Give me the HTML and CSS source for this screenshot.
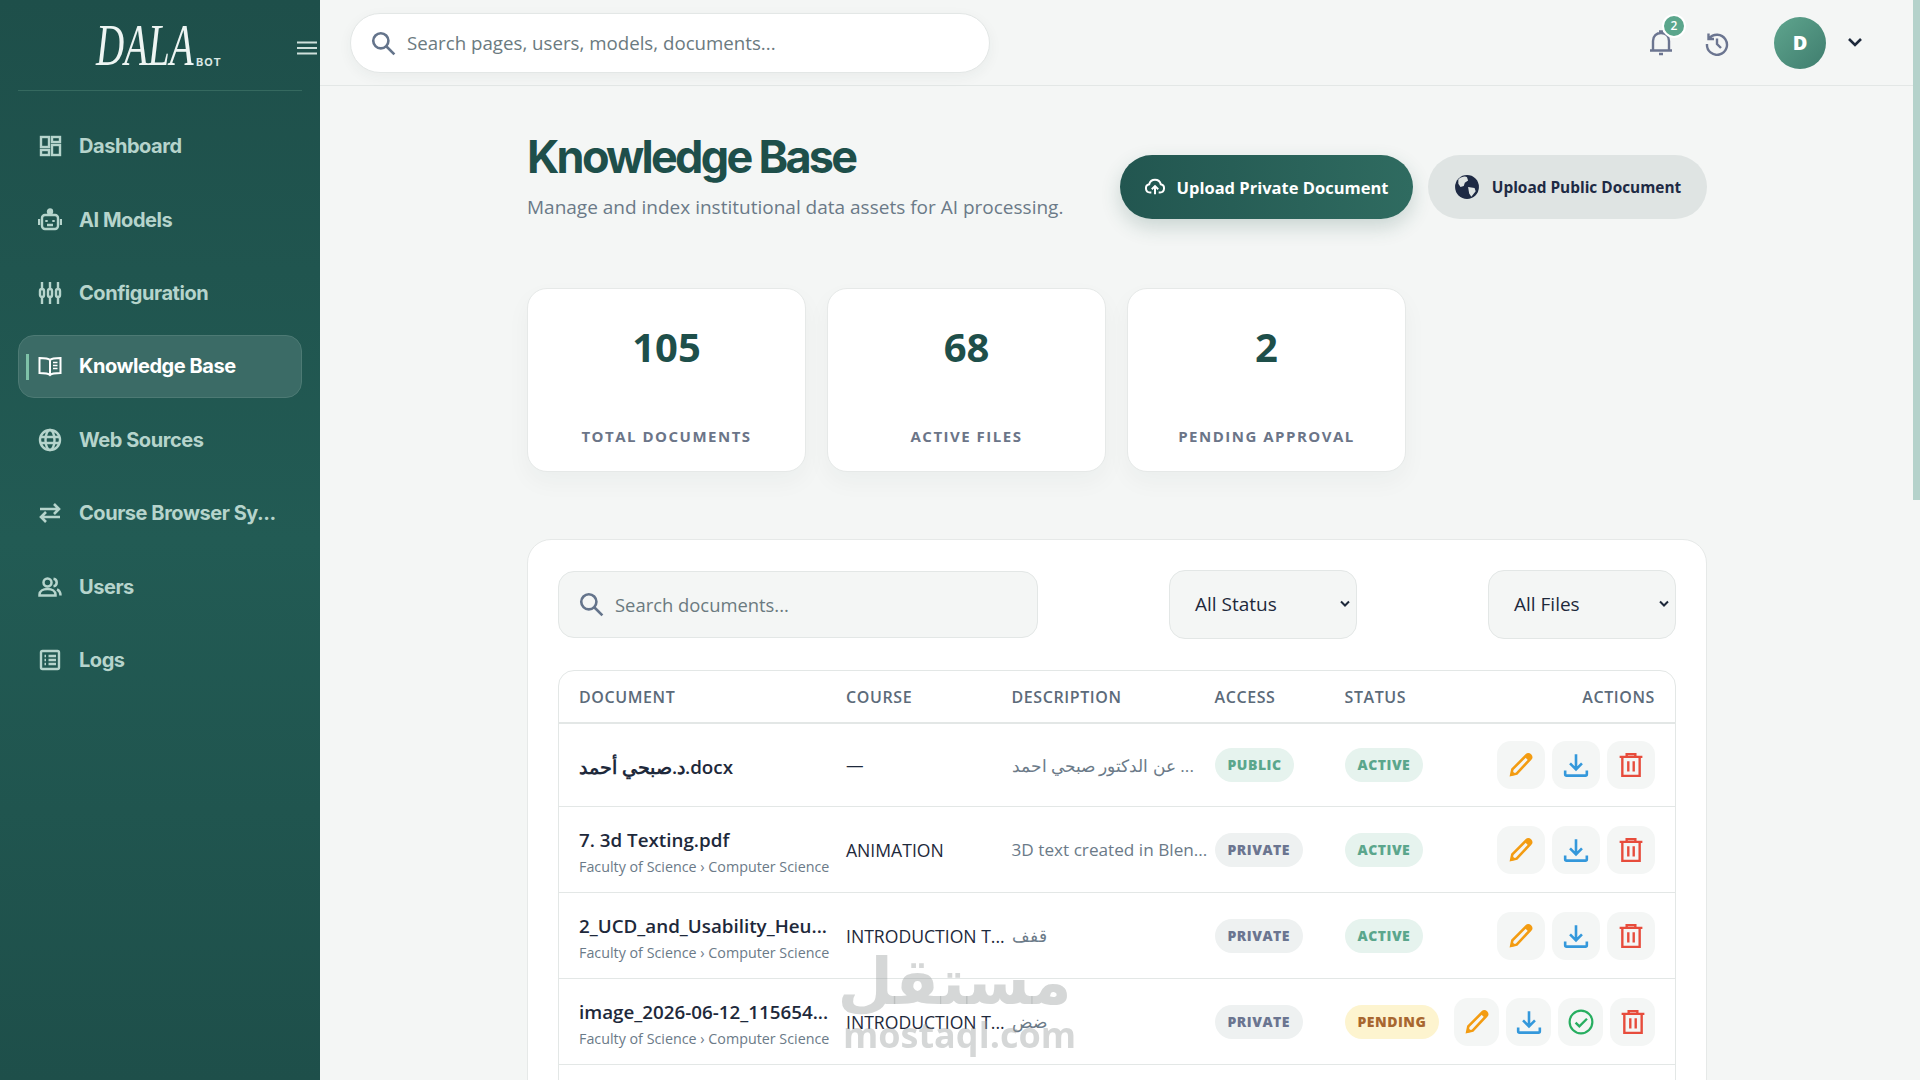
FILE: index.html
```html
<!DOCTYPE html>
<html lang="en">
<head>
    <meta charset="UTF-8">
    <meta name="viewport" content="width=device-width, initial-scale=1.0">
    <title>Knowledge Base</title>
    <link rel="stylesheet" href="styles.css">
</head>
<body>
    <div class="app">
        <aside class="sidebar">
            <div class="brand">
                <span class="brand-name">DALA</span>
                <span class="brand-sub">BOT</span>
                <button class="menu-toggle" aria-label="Toggle menu">
                    <svg viewBox="0 0 22 16" width="22" height="16" fill="none" stroke="currentColor" stroke-width="2"><path d="M1 2.500h20M1 8h20M1 13.500h20"/></svg>
                </button>
            </div>
            <nav class="nav">
                <a class="nav-item">
                    <svg class="nav-icon" viewBox="0 0 24 24" fill="none" stroke="currentColor" stroke-width="2.400"><rect x="3" y="3" width="8" height="10"/><rect x="14" y="3" width="8" height="5"/><rect x="3" y="16" width="8" height="5"/><rect x="14" y="11" width="8" height="10"/></svg>
                    <span>Dashboard</span>
                </a>
                <a class="nav-item">
                    <svg class="nav-icon" viewBox="0 0 24 24" fill="none" stroke="currentColor" stroke-width="2.400"><rect x="4" y="7" width="16" height="14" rx="3"/><circle cx="12" cy="3.500" r="2" fill="currentColor"/><path d="M12 4v3M1 11v6M23 11v6M8.500 12v2M15.500 12v2M9 17h6"/></svg>
                    <span>AI Models</span>
                </a>
                <a class="nav-item">
                    <svg class="nav-icon" viewBox="0 0 24 24" fill="none" stroke="currentColor" stroke-width="2.400"><path d="M4 1v22M12 1v22M20 1v22"/><rect x="2" y="8" width="4" height="8" rx="2" fill="#20564f"/><rect x="10" y="8" width="4" height="8" rx="2" fill="#20564f"/><rect x="18" y="8" width="4" height="8" rx="2" fill="#20564f"/></svg>
                    <span>Configuration</span>
                </a>
                <a class="nav-item active">
                    <svg class="nav-icon" viewBox="0 0 24 24" fill="none" stroke="currentColor" stroke-width="2"><path d="M12 6C10 4 6 4 1.500 4v15c4.500 0 8.500 0 10.500 2 2-2 6-2 10.500-2V4C18 4 14 4 12 6zM12 6v15"/><path d="M15 8.500h4.500M15 11.500h4.500M15 14.500h4.500" stroke-width="1.600"/></svg>
                    <span>Knowledge Base</span>
                </a>
                <a class="nav-item">
                    <svg class="nav-icon" viewBox="0 0 24 24" fill="none" stroke="currentColor" stroke-width="2.400"><circle cx="12" cy="12" r="10"/><ellipse cx="12" cy="12" rx="4.500" ry="10"/><path d="M2.500 9h19M2.500 15h19"/></svg>
                    <span>Web Sources</span>
                </a>
                <a class="nav-item">
                    <svg class="nav-icon" viewBox="0 0 24 24" fill="none" stroke="currentColor" stroke-width="2.600"><path d="M2 8h19M16 3l5 5-5 5M3 16h19M8 11l-5 5 5 5"/></svg>
                    <span>Course Browser Sy...</span>
                </a>
                <a class="nav-item">
                    <svg class="nav-icon" viewBox="0 0 24 24" fill="none" stroke="currentColor" stroke-width="2.500"><circle cx="9.500" cy="7.500" r="4"/><path d="M1.500 20.500v-1c0-3.500 3.500-5.500 8-5.500s8 2 8 5.500v1zM15.500 3.800c2 .3 3.200 2 3.200 3.700s-1.200 3.400-3.200 3.700M19 14.500c2.500 1 3.500 2.800 3.500 6"/></svg>
                    <span>Users</span>
                </a>
                <a class="nav-item">
                    <svg class="nav-icon" viewBox="0 0 24 24" fill="none" stroke="currentColor" stroke-width="2.400"><rect x="3" y="3" width="18" height="18" rx="1.500"/><path d="M10.500 8H18M10.500 12H18M10.500 16H18M6.500 8h1.500M6.500 12h1.500M6.500 16h1.500"/></svg>
                    <span>Logs</span>
                </a>
            </nav>
        </aside>

        <div class="page">
            <header class="topbar">
                <div class="global-search">
                    <svg class="search-icon" viewBox="0 0 24 24" fill="none" stroke="#64748b" stroke-width="2.400"><circle cx="10" cy="10" r="7"/><path d="M15 15l7.500 7.500"/></svg>
                    <span class="placeholder">Search pages, users, models, documents...</span>
                </div>
                <div class="topbar-right">
                    <div class="bell">
                        <svg viewBox="0 0 24 28" width="24" height="28" fill="none" stroke="#6b7590" stroke-width="2.400"><path d="M1 21.500h22M4 21.500V12c0-5 3.500-8 8-8s8 3 8 8v9.500M10 2.500h4M10 25h4"/></svg>
                        <span class="bell-badge">2</span>
                    </div>
                    <svg class="history" viewBox="0 0 24 24" width="24" height="24" fill="none" stroke="#6b7590" stroke-width="2.400"><path d="M4.200 6.500A10 10 0 1 1 2 12M3.500 1.500v5.500H9M12 6.500V12l4 4"/></svg>
                    <div class="avatar">D</div>
                    <svg class="caret" viewBox="0 0 16 10" width="16" height="10" fill="none" stroke="#1e293b" stroke-width="2.600"><path d="M2 2l6 6 6-6"/></svg>
                </div>
            </header>

            <main class="content">
                <div class="page-head">
                    <div>
                        <h1>Knowledge Base</h1>
                        <p>Manage and index institutional data assets for AI processing.</p>
                    </div>
                    <div class="head-actions">
                        <button class="btn btn-primary">
                            <svg viewBox="0 0 24 24" width="22" height="22" fill="none" stroke="#fff" stroke-width="2.200"><path d="M8 18H6.500a4.500 4.500 0 0 1-.8-8.900 6.500 6.500 0 0 1 12.600 0 4.500 4.500 0 0 1-.8 8.900H16M12 20v-8M8.500 14.500L12 11l3.500 3.500"/></svg>
                            Upload Private Document
                        </button>
                        <button class="btn btn-secondary">
                            <svg viewBox="0 0 24 24" width="26" height="26"><circle cx="12" cy="12" r="11" fill="#1e2a44"/><path d="M4 5c3-3 7-3 8-2l1 3-3 2-1 3-3 1-2-3zM13 12l6 1 1 3-4 5-2-3z" fill="#dfe4e3"/></svg>
                            Upload Public Document
                        </button>
                    </div>
                </div>

                <section class="stats">
                    <div class="stat-card"><div class="stat-value">105</div><div class="stat-label">TOTAL DOCUMENTS</div></div>
                    <div class="stat-card"><div class="stat-value">68</div><div class="stat-label">ACTIVE FILES</div></div>
                    <div class="stat-card"><div class="stat-value">2</div><div class="stat-label">PENDING APPROVAL</div></div>
                </section>

                <section class="panel">
                    <div class="filters">
                        <div class="doc-search">
                            <svg class="search-icon" viewBox="0 0 24 24" fill="none" stroke="#64748b" stroke-width="2.400"><circle cx="10" cy="10" r="7"/><path d="M15 15l7.500 7.500"/></svg>
                            <span class="placeholder small">Search documents...</span>
                        </div>
                        <div class="select">All Status<svg viewBox="0 0 10 8" width="10" height="8" fill="none" stroke="#1e293b" stroke-width="2"><path d="M1 1.500l4 4 4-4"/></svg></div>
                        <div class="select">All Files<svg viewBox="0 0 10 8" width="10" height="8" fill="none" stroke="#1e293b" stroke-width="2"><path d="M1 1.500l4 4 4-4"/></svg></div>
                    </div>

                    <table class="docs">
                        <colgroup>
                            <col class="col-doc"><col class="col-course"><col class="col-desc"><col class="col-access"><col class="col-status"><col>
                        </colgroup>
                        <thead>
                            <tr>
                                <th>DOCUMENT</th><th>COURSE</th><th>DESCRIPTION</th><th>ACCESS</th><th>STATUS</th><th class="right">ACTIONS</th>
                            </tr>
                        </thead>
                        <tbody>
                            <tr class="row-short">
                                <td><div class="doc-name"><bdi>د.صبحي أحمد</bdi>.docx</div></td>
                                <td>—</td>
                                <td class="desc"><bdi dir="rtl">... عن الدكتور صبحي احمد</bdi></td>
                                <td><span class="pill pill-public">PUBLIC</span></td>
                                <td><span class="pill pill-active">ACTIVE</span></td>
                                <td><div class="actions">
                                    <button class="act"><svg viewBox="0 0 24 24"><use href="#i-edit"/></svg></button>
                                    <button class="act"><svg viewBox="0 0 24 24"><use href="#i-down"/></svg></button>
                                    <button class="act"><svg viewBox="0 0 24 24"><use href="#i-trash"/></svg></button>
                                </div></td>
                            </tr>
                            <tr>
                                <td><div class="doc-name">7. 3d Texting.pdf</div><div class="doc-path">Faculty of Science › Computer Science</div></td>
                                <td>ANIMATION</td>
                                <td class="desc">3D text created in Blen...</td>
                                <td><span class="pill pill-private">PRIVATE</span></td>
                                <td><span class="pill pill-active">ACTIVE</span></td>
                                <td><div class="actions">
                                    <button class="act"><svg viewBox="0 0 24 24"><use href="#i-edit"/></svg></button>
                                    <button class="act"><svg viewBox="0 0 24 24"><use href="#i-down"/></svg></button>
                                    <button class="act"><svg viewBox="0 0 24 24"><use href="#i-trash"/></svg></button>
                                </div></td>
                            </tr>
                            <tr>
                                <td><div class="doc-name">2_UCD_and_Usability_Heu...</div><div class="doc-path">Faculty of Science › Computer Science</div></td>
                                <td>INTRODUCTION T...</td>
                                <td class="desc">قفف</td>
                                <td><span class="pill pill-private">PRIVATE</span></td>
                                <td><span class="pill pill-active">ACTIVE</span></td>
                                <td><div class="actions">
                                    <button class="act"><svg viewBox="0 0 24 24"><use href="#i-edit"/></svg></button>
                                    <button class="act"><svg viewBox="0 0 24 24"><use href="#i-down"/></svg></button>
                                    <button class="act"><svg viewBox="0 0 24 24"><use href="#i-trash"/></svg></button>
                                </div></td>
                            </tr>
                            <tr>
                                <td><div class="doc-name">image_2026-06-12_115654...</div><div class="doc-path">Faculty of Science › Computer Science</div></td>
                                <td>INTRODUCTION T...</td>
                                <td class="desc">ضض</td>
                                <td><span class="pill pill-private">PRIVATE</span></td>
                                <td><span class="pill pill-pending">PENDING</span></td>
                                <td><div class="actions narrow">
                                    <button class="act"><svg viewBox="0 0 24 24"><use href="#i-edit"/></svg></button>
                                    <button class="act"><svg viewBox="0 0 24 24"><use href="#i-down"/></svg></button>
                                    <button class="act"><svg viewBox="0 0 24 24"><use href="#i-check"/></svg></button>
                                    <button class="act"><svg viewBox="0 0 24 24"><use href="#i-trash"/></svg></button>
                                </div></td>
                            </tr>
                            <tr class="row-more"><td colspan="6"></td></tr>
                        </tbody>
                    </table>
                </section>
            </main>
        </div>
    </div>

    <div class="scroll-thumb"></div>
    <div class="watermark"><span class="wm-ar">مستقل</span><span class="wm-en">mostaql.com</span></div>

    <!-- shared action icons -->
    <svg class="sprite" width="0" height="0">
        <symbol id="i-edit" viewBox="0 0 24 24"><path d="M3 21l1-5L17 3c1-1 2.500-1 3.500 0s1 2.500 0 3.500L8 20z" fill="none" stroke="#f39c12" stroke-width="2.400"/><path d="M15.500 4.500l4 4L21 7c1-1 1-2.800 0-3.800s-2.800-1-3.800 0zM2.500 22l1-5 4 4z" fill="#f39c12"/></symbol>
        <symbol id="i-down" viewBox="0 0 24 24"><path d="M12 2v14M6.500 10.500L12 16l5.500-5.500M2 17v3.500c0 .8.500 1.300 1.300 1.300h17.400c.8 0 1.300-.5 1.300-1.300V17" fill="none" stroke="#3498db" stroke-width="2.400"/></symbol>
        <symbol id="i-check" viewBox="0 0 24 24"><circle cx="12" cy="12" r="10.500" fill="none" stroke="#27ae60" stroke-width="2"/><path d="M7 12.500l3.500 3.500L17.500 9" fill="none" stroke="#27ae60" stroke-width="2.200"/></symbol>
        <symbol id="i-trash" viewBox="0 0 24 24"><path d="M1.500 4.500h21M8 4.500V2h8v2.500M4 4.500h16V22H4zM9.500 8.500v9.500M14.500 8.500v9.500" fill="none" stroke="#e74c3c" stroke-width="2.200"/></symbol>
    </svg>
</body>
</html>
```

FILE: styles.css
```css
* {
    box-sizing: border-box;
}
html, body {
    height: 100%;
    margin: 0;
}
body {
    font-family: 'Open Sans', sans-serif;
    background: #f4f6f5;
    color: #1e293b;
    overflow: hidden;
}
button {
    font-family: inherit;
    border: none;
    cursor: pointer;
}
.app {
    display: flex;
    height: 100vh;
    overflow: hidden;
}

/* sidebar */
.sidebar {
    flex: 0 0 320px;
    background: linear-gradient(180deg, #1e4f4a 0%, #225b54 50%, #1e4f4a 100%);
    padding: 0 18px;
}
.brand {
    position: relative;
    height: 91px;
    border-bottom: 1px solid #35695f;
    display: flex;
    align-items: flex-start;
    padding: 20px 0 0 78px;
}
.brand-name {
    display: block;
    width: 98px;
    font-family: 'Liberation Serif', serif;
    font-style: italic;
    font-size: 60px;
    line-height: 50px;
    color: #eef5f3;
    transform: scaleX(0.65);
    transform-origin: left center;
}
.brand-sub {
    font-family: Inter, sans-serif;
    font-weight: 700;
    font-size: 11px;
    letter-spacing: 1px;
    color: #d9e7e3;
    margin: 35px 0 0 2px;
}
.menu-toggle {
    position: absolute;
    right: -17px;
    top: 40px;
    width: 24px;
    height: 16px;
    padding: 0;
    background: none;
    color: #cfe0db;
}
.nav {
    display: flex;
    flex-direction: column;
    gap: 9.900px;
    padding-top: 23.500px;
}
.nav-item {
    display: flex;
    align-items: center;
    gap: 17px;
    height: 63.500px;
    padding-left: 19px;
    color: #b6d4cc;
    font-family: Inter, sans-serif;
    font-weight: 700;
    font-size: 20px;
    letter-spacing: -0.450px;
    border: 1px solid transparent;
    border-radius: 16px;
    position: relative;
    white-space: nowrap;
}
.nav-icon {
    width: 24px;
    height: 24px;
    flex: none;
}
.nav-item.active {
    background: #3b6b66;
    border-color: #4d7a74;
    color: #fff;
}
.nav-item.active::before {
    content: "";
    position: absolute;
    left: 7px;
    top: 18px;
    width: 3px;
    height: 26px;
    background: #7fc2a8;
}

/* top bar */
.page {
    flex: 1;
    min-width: 0;
}
.topbar {
    height: 86px;
    border-bottom: 1px solid #e3e7e6;
    display: flex;
    align-items: center;
    justify-content: space-between;
    padding: 0 0 0 30px;
}
.global-search {
    width: 640px;
    height: 60px;
    background: #fff;
    border: 1px solid #e3e7e6;
    border-radius: 30px;
    box-shadow: 0 4px 14px rgba(30, 60, 55, 0.05);
    display: flex;
    align-items: center;
    gap: 11px;
    padding-left: 19px;
}
.search-icon {
    width: 26px;
    height: 26px;
    flex: none;
}
.placeholder {
    font-size: 18.700px;
    color: #6b7a80;
}
.placeholder.small {
    font-size: 18.400px;
}
.topbar-right {
    display: flex;
    align-items: center;
    position: relative;
    width: 265px;
    height: 60px;
    margin-right: 11px;
}
.bell {
    position: absolute;
    left: 5px;
    top: 16px;
    line-height: 0;
}
.bell-badge {
    position: absolute;
    left: 13px;
    top: -15px;
    width: 24px;
    height: 24px;
    border-radius: 50%;
    background: #5ba68c;
    border: 2px solid #fff;
    color: #fff;
    font-size: 12px;
    font-weight: 600;
    line-height: 20px;
    text-align: center;
}
.history {
    position: absolute;
    left: 61px;
    top: 19px;
}
.avatar {
    position: absolute;
    left: 130px;
    top: 4px;
    width: 52px;
    height: 52px;
    border-radius: 50%;
    background: linear-gradient(135deg, #5fa58e, #3f7d6e);
    color: #fff;
    font-weight: 800;
    font-size: 20px;
    line-height: 52px;
    text-align: center;
}
.caret {
    position: absolute;
    left: 203px;
    top: 24px;
}

/* page content */
.content {
    padding: 44px 213px 0 207px;
}
.page-head {
    display: flex;
    justify-content: space-between;
}
h1 {
    margin: 0;
    font-family: Inter, sans-serif;
    font-size: 45px;
    line-height: 54px;
    font-weight: 700;
    letter-spacing: -2.750px;
    color: #1e4f4a;
}
.page-head p {
    margin: 10px 0 0;
    font-size: 19px;
    line-height: 27px;
    color: #6b7a88;
}
.head-actions {
    display: flex;
    gap: 15px;
    padding-top: 25px;
}
.btn {
    height: 64px;
    border-radius: 32px;
    display: flex;
    align-items: center;
    font-size: 16.500px;
    font-weight: 700;
}
.btn-primary {
    width: 293px;
    gap: 10px;
    justify-content: center;
    color: #fff;
    background: linear-gradient(90deg, #225650, #2f6b60);
    box-shadow: 0 8px 20px rgba(30, 80, 72, 0.2);
}
.btn-secondary {
    width: 279px;
    gap: 12px;
    justify-content: center;
    color: #1e2a44;
    background: #dfe4e3;
    font-size: 15.400px;
}

.stats {
    display: flex;
    gap: 21px;
    margin-top: 67px;
}
.stat-card {
    width: 279px;
    height: 184px;
    background: #fff;
    border: 1px solid #e6e9e8;
    border-radius: 20px;
    box-shadow: 0 10px 24px rgba(30, 60, 55, 0.04);
    text-align: center;
    padding-top: 31px;
}
.stat-value {
    font-size: 40px;
    line-height: 54px;
    font-weight: 700;
    color: #1e4f4a;
}
.stat-label {
    margin-top: 52px;
    font-size: 15px;
    line-height: 20px;
    font-weight: 700;
    letter-spacing: 1.500px;
    color: #6b7588;
}

.panel {
    margin-top: 67px;
    background: #fff;
    border: 1px solid #e6e9e8;
    border-radius: 24px 24px 0 0;
    padding: 29px 30px 40px;
}
.filters {
    display: flex;
    justify-content: space-between;
    align-items: center;
    height: 70px;
}
.doc-search {
    width: 480px;
    height: 67px;
    background: #f4f6f5;
    border: 1px solid #e3e7e6;
    border-radius: 16px;
    display: flex;
    align-items: center;
    gap: 11px;
    padding-left: 19px;
}
.select {
    width: 188px;
    height: 69px;
    background: #f4f6f5;
    border: 1px solid #e3e7e6;
    border-radius: 16px;
    display: flex;
    align-items: center;
    justify-content: space-between;
    padding: 0 6px 0 25px;
    font-size: 19px;
}

/* documents table */
.docs {
    width: 100%;
    margin-top: 31px;
    border-collapse: separate;
    border-spacing: 0;
    table-layout: fixed;
    border: 1px solid #e3e7e6;
    border-radius: 16px 16px 0 0;
}
.col-doc { width: 279px; }
.col-course { width: 165.500px; }
.col-desc { width: 203px; }
.col-access { width: 130px; }
.col-status { width: 109px; }
.docs th {
    height: 53px;
    padding: 1px 0 0 8px;
    text-align: left;
    font-size: 16px;
    font-weight: 600;
    letter-spacing: 0.600px;
    color: #5c6b7a;
    border-bottom: 2px solid #e3e7e6;
}
.docs th:first-child,
.docs td:first-child {
    padding-left: 20px;
}
.docs td:first-child {
    padding-top: 4px;
}
.docs th.right {
    text-align: right;
    padding-right: 20px;
}
.docs td {
    height: 86px;
    padding: 0 0 0 8px;
    font-size: 17.600px;
    border-bottom: 1px solid #e3e7e6;
    white-space: nowrap;
    overflow: hidden;
}
.docs .row-short td {
    height: 83px;
}
.doc-name {
    font-size: 18.800px;
    font-weight: 600;
    line-height: 27px;
}
.doc-path {
    font-size: 14.300px;
    line-height: 21px;
    margin-top: 2px;
    color: #6b7a88;
}
.docs td.desc {
    font-size: 17.200px;
    color: #6b7a88;
}
.pill {
    display: inline-block;
    height: 34px;
    padding: 0 13px;
    border-radius: 17px;
    line-height: 34px;
    font-size: 14px;
    font-weight: 800;
    letter-spacing: 0.500px;
    vertical-align: middle;
}
.pill-public, .pill-active {
    background: #e6f3ee;
    color: #5ba68c;
}
.pill-private {
    background: #eef1f1;
    color: #6b7590;
}
.pill-pending {
    background: #fdf4cf;
    color: #a8672f;
}
.actions {
    display: flex;
    justify-content: flex-end;
    gap: 7px;
    padding-right: 20px;
}
.act {
    width: 48px;
    height: 48px;
    padding: 11px;
    border-radius: 14px;
    background: #f4f6f5;
    line-height: 0;
}
.act svg {
    width: 26px;
    height: 26px;
}
.narrow .act {
    width: 45px;
    padding: 11px 9.500px;
}
.sprite {
    position: absolute;
}

/* overlays: scrollbar thumb and the site watermark */
.scroll-thumb {
    position: fixed;
    right: 0;
    top: 0;
    width: 7px;
    height: 500px;
    background: #b5d2cb;
}
.watermark {
    position: fixed;
    left: 842px;
    top: 945px;
    width: 235px;
    text-align: center;
    color: rgba(150, 155, 155, 0.4);
    pointer-events: none;
    font-family: 'Open Sans', 'DejaVu Sans', sans-serif;
    font-weight: 700;
}
.wm-ar {
    display: block;
    font-size: 64px;
    line-height: 70px;
    margin-left: -10px;
}
.wm-en {
    display: block;
    font-size: 36px;
    line-height: 40px;
}
```
